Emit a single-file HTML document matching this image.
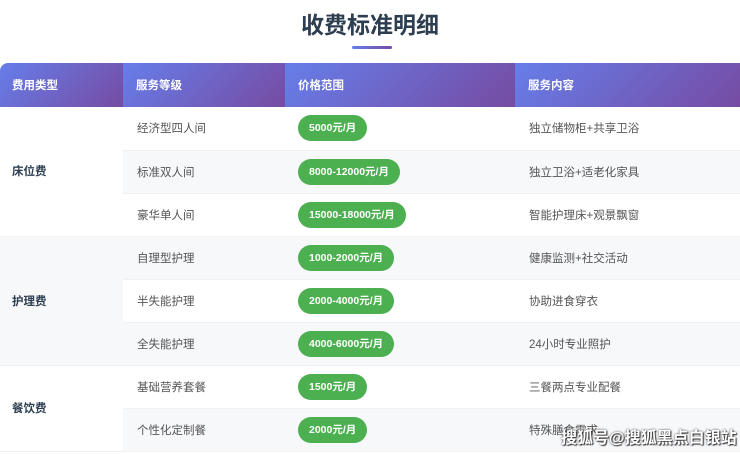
<!DOCTYPE html>
<html><head><meta charset="utf-8"><style>
body{margin:0;width:740px;height:454px;overflow:hidden;background:#fff;font-family:"Liberation Sans","Noto Sans CJK SC",sans-serif;}
h1{margin:0;position:absolute;top:8px;left:0;width:740px;text-align:center;font-size:23px;font-weight:bold;color:#2c3e50;line-height:34px;}
.bar{position:absolute;left:352px;top:46px;width:40px;height:3px;border-radius:2px;background:linear-gradient(90deg,#667eea,#764ba2);}
table{position:absolute;top:63px;left:0;width:740px;border-collapse:collapse;font-size:11.5px;}
th{height:44px;padding:0 0 0 13px;text-align:left;color:#fff;font-weight:bold;background:linear-gradient(135deg,#667eea,#764ba2);font-size:11.5px;}
th:first-child{border-top-left-radius:8px;padding-left:12px}
td{height:43px;box-sizing:border-box;padding:0 0 0 14px;color:#555;border-bottom:1px solid #f0f1f3;}
tr:nth-child(even) td{background:#f7f8fa;}
td.cat{font-weight:bold;color:#2c3e50;padding-left:12px;}
.p{display:inline-block;background:#4caf50;color:#fff;font-weight:bold;border-radius:13px;height:26px;line-height:26px;padding:0 11px;font-size:10.5px;}
td.pc{padding-left:13px}
.wm{position:absolute;left:561px;top:424px;font-size:16px;color:#fff;font-weight:bold;text-shadow:0 0 2px #333,1px 1px 1px #333;}
</style></head><body>
<h1>收费标准明细</h1><div class="bar"></div>
<table>
<colgroup><col style="width:123px"><col style="width:162px"><col style="width:230px"><col style="width:225px"></colgroup>
<thead><tr><th>费用类型</th><th>服务等级</th><th>价格范围</th><th>服务内容</th></tr></thead>
<tbody>
<tr><td class="cat" rowspan="3">床位费</td><td>经济型四人间</td><td class="pc"><span class="p">5000元/月</span></td><td>独立储物柜+共享卫浴</td></tr>
<tr><td>标准双人间</td><td class="pc"><span class="p">8000-12000元/月</span></td><td>独立卫浴+适老化家具</td></tr>
<tr><td>豪华单人间</td><td class="pc"><span class="p">15000-18000元/月</span></td><td>智能护理床+观景飘窗</td></tr>
<tr><td class="cat" rowspan="3">护理费</td><td>自理型护理</td><td class="pc"><span class="p">1000-2000元/月</span></td><td>健康监测+社交活动</td></tr>
<tr><td>半失能护理</td><td class="pc"><span class="p">2000-4000元/月</span></td><td>协助进食穿衣</td></tr>
<tr><td>全失能护理</td><td class="pc"><span class="p">4000-6000元/月</span></td><td>24小时专业照护</td></tr>
<tr><td class="cat" rowspan="2">餐饮费</td><td>基础营养套餐</td><td class="pc"><span class="p">1500元/月</span></td><td>三餐两点专业配餐</td></tr>
<tr><td>个性化定制餐</td><td class="pc"><span class="p">2000元/月</span></td><td>特殊膳食需求</td></tr>
</tbody></table>
<div class="wm">搜狐号@搜狐黑点白银站</div>
</body></html>
